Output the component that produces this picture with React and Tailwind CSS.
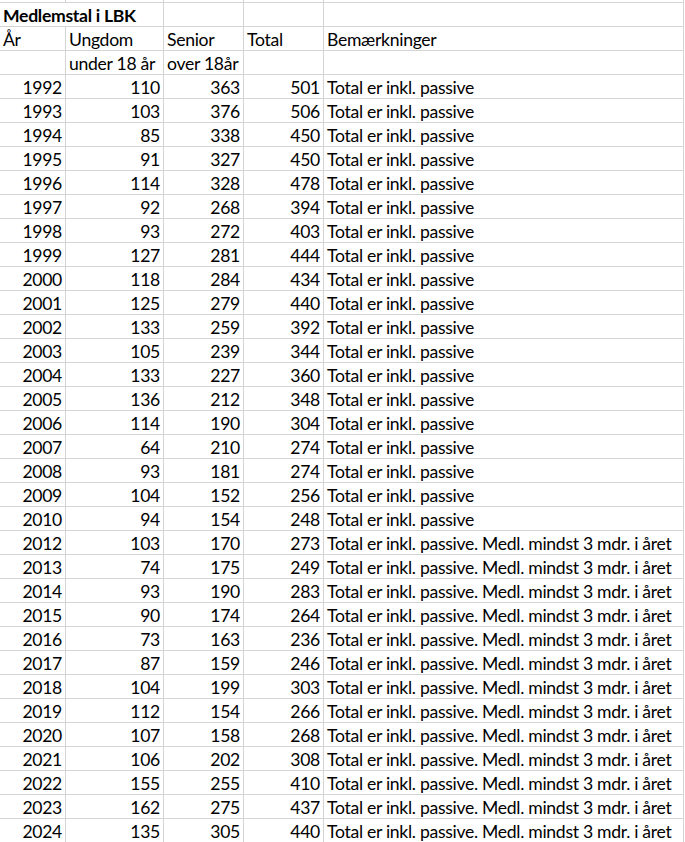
import React from "react";

const rows = [
  [1992, 110, 363, 501],
  [1993, 103, 376, 506],
  [1994, 85, 338, 450],
  [1995, 91, 327, 450],
  [1996, 114, 328, 478],
  [1997, 92, 268, 394],
  [1998, 93, 272, 403],
  [1999, 127, 281, 444],
  [2000, 118, 284, 434],
  [2001, 125, 279, 440],
  [2002, 133, 259, 392],
  [2003, 105, 239, 344],
  [2004, 133, 227, 360],
  [2005, 136, 212, 348],
  [2006, 114, 190, 304],
  [2007, 64, 210, 274],
  [2008, 93, 181, 274],
  [2009, 104, 152, 256],
  [2010, 94, 154, 248],
  [2012, 103, 170, 273],
  [2013, 74, 175, 249],
  [2014, 93, 190, 283],
  [2015, 90, 174, 264],
  [2016, 73, 163, 236],
  [2017, 87, 159, 246],
  [2018, 104, 199, 303],
  [2019, 112, 154, 266],
  [2020, 107, 158, 268],
  [2021, 106, 202, 308],
  [2022, 155, 255, 410],
  [2023, 162, 275, 437],
  [2024, 135, 305, 440],
];

const SHORT = "Total er inkl. passive";
const LONG = "Total er inkl. passive. Medl. mindst 3 mdr. i året";

function Cell({ children, right, bold, span }) {
  return (
    <div
      className={
        "h-[24px] border-b border-r border-[#d4d4d4] px-[3px] pt-[2px] leading-[22px] whitespace-nowrap " +
        (right ? "text-right " : "text-left ") +
        (bold ? "font-bold " : "") +
        (span ? "col-span-2" : "")
      }
    >
      {children}
    </div>
  );
}

export default function App() {
  return (
    <div
      className="w-[685px] h-[842px] overflow-hidden bg-white text-black text-[17.6px] tracking-[-0.3px]"
      style={{ fontFamily: "Lato, 'Liberation Sans', sans-serif" }}
    >
      <div className="grid grid-cols-[66px_98px_80px_80px_360px]">
        {/* cut-off row above the title */}
        {[0, 1, 2, 3, 4].map((i) => (
          <div key={i} className="h-[3px] border-b border-r border-[#d4d4d4]" />
        ))}

        <Cell bold span>Medlemstal i LBK</Cell>
        <Cell />
        <Cell />
        <Cell />

        <Cell>År</Cell>
        <Cell>Ungdom</Cell>
        <Cell>Senior</Cell>
        <Cell>Total</Cell>
        <Cell>Bemærkninger</Cell>

        <Cell />
        <Cell>under 18 år</Cell>
        <Cell>over 18år</Cell>
        <Cell />
        <Cell />

        {rows.map(([year, young, senior, total]) => (
          <React.Fragment key={year}>
            <Cell right>{year}</Cell>
            <Cell right>{young}</Cell>
            <Cell right>{senior}</Cell>
            <Cell right>{total}</Cell>
            <Cell>{year < 2011 ? SHORT : LONG}</Cell>
          </React.Fragment>
        ))}
      </div>
    </div>
  );
}
